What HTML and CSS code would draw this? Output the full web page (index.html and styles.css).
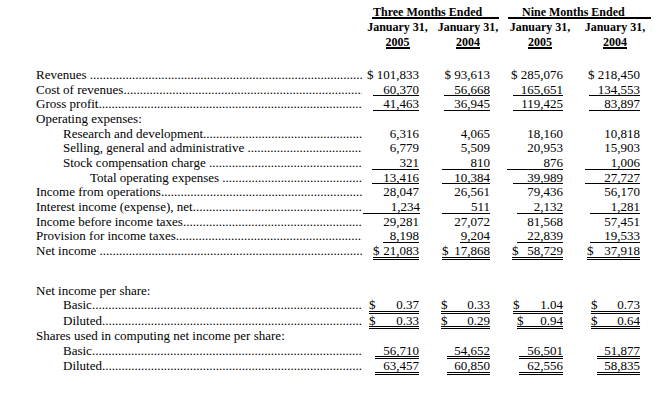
FILE: index.html
```html
<!DOCTYPE html>
<html lang="en">
<head>
<meta charset="utf-8">
<title>Condensed Consolidated Statements of Income</title>
<link rel="stylesheet" href="styles.css">
</head>
<body>
<div class="statement">
  <div class="head">
    <div class="title-cell span-three"><span class="title title-three">Three Months Ended</span></div>
    <div class="title-cell span-nine"><span class="title title-nine">Nine Months Ended</span></div>
    <div class="hc">January 31,</div>
    <div class="hc">January 31,</div>
    <div class="hc">January 31,</div>
    <div class="hc">January 31,</div>
    <div class="hc"><span class="yr">2005</span></div>
    <div class="hc"><span class="yr">2004</span></div>
    <div class="hc"><span class="yr">2005</span></div>
    <div class="hc"><span class="yr">2004</span></div>
  </div>

  <div class="grid">
    <div class="label"><span class="txt">Revenues </span><span class="dots"></span></div>
    <div class="v">$ 101,833</div>
    <div class="v">$ 93,613</div>
    <div class="v">$ 285,076</div>
    <div class="v">$ 218,450</div>

    <div class="label"><span class="txt">Cost of revenues</span><span class="dots"></span></div>
    <div class="v"><span class="u w46">60,370</span></div>
    <div class="v"><span class="u w46">56,668</span></div>
    <div class="v"><span class="u w50">165,651</span></div>
    <div class="v"><span class="u w51">134,553</span></div>

    <div class="label"><span class="txt">Gross profit</span><span class="dots"></span></div>
    <div class="v"><span class="u w46">41,463</span></div>
    <div class="v"><span class="u w46">36,945</span></div>
    <div class="v"><span class="u w50">119,425</span></div>
    <div class="v"><span class="u w51">83,897</span></div>

    <div class="section">Operating expenses:</div>

    <div class="label in1"><span class="txt">Research and development</span><span class="dots"></span></div>
    <div class="v">6,316</div>
    <div class="v">4,065</div>
    <div class="v">18,160</div>
    <div class="v">10,818</div>

    <div class="label in1"><span class="txt">Selling, general and administrative </span><span class="dots"></span></div>
    <div class="v">6,779</div>
    <div class="v">5,509</div>
    <div class="v">20,953</div>
    <div class="v">15,903</div>

    <div class="label in1"><span class="txt">Stock compensation charge </span><span class="dots"></span></div>
    <div class="v"><span class="u w47">321</span></div>
    <div class="v"><span class="u w48">810</span></div>
    <div class="v"><span class="u w56">876</span></div>
    <div class="v"><span class="u w55">1,006</span></div>

    <div class="label in2"><span class="txt">Total operating expenses </span><span class="dots"></span></div>
    <div class="v"><span class="u w47">13,416</span></div>
    <div class="v"><span class="u w48">10,384</span></div>
    <div class="v"><span class="u w50">39,989</span></div>
    <div class="v"><span class="u w55">27,727</span></div>

    <div class="label"><span class="txt">Income from operations</span><span class="dots"></span></div>
    <div class="v">28,047</div>
    <div class="v">26,561</div>
    <div class="v">79,436</div>
    <div class="v">56,170</div>

    <div class="label"><span class="txt">Interest income (expense), net</span><span class="dots"></span></div>
    <div class="v"><span class="u w57">1,234</span></div>
    <div class="v"><span class="u w48">511</span></div>
    <div class="v"><span class="u w46">2,132</span></div>
    <div class="v"><span class="u w50">1,281</span></div>

    <div class="label"><span class="txt">Income before income taxes</span><span class="dots"></span></div>
    <div class="v">29,281</div>
    <div class="v">27,072</div>
    <div class="v">81,568</div>
    <div class="v">57,451</div>

    <div class="label"><span class="txt">Provision for income taxes</span><span class="dots"></span></div>
    <div class="v"><span class="u w36">8,198</span></div>
    <div class="v"><span class="u w30">9,204</span></div>
    <div class="v"><span class="u w46">22,839</span></div>
    <div class="v"><span class="u w50">19,533</span></div>

    <div class="label"><span class="txt">Net income </span><span class="dots"></span></div>
    <div class="v"><span class="u dbl cur w46"><span>$</span><span>21,083</span></span></div>
    <div class="v"><span class="u dbl cur w48"><span>$</span><span>17,868</span></span></div>
    <div class="v"><span class="u dbl cur w51"><span>$</span><span>58,729</span></span></div>
    <div class="v"><span class="u dbl cur w53"><span>$</span><span>37,918</span></span></div>

    <div class="spacer"></div>

    <div class="section">Net income per share:</div>

    <div class="label in1"><span class="txt">Basic</span><span class="dots"></span></div>
    <div class="v"><span class="u dbl cur w50"><span>$</span><span>0.37</span></span></div>
    <div class="v"><span class="u dbl cur w49"><span>$</span><span>0.33</span></span></div>
    <div class="v"><span class="u dbl cur w50"><span>$</span><span>1.04</span></span></div>
    <div class="v"><span class="u dbl cur w49"><span>$</span><span>0.73</span></span></div>

    <div class="label in1"><span class="txt">Diluted</span><span class="dots"></span></div>
    <div class="v"><span class="u dbl cur w50"><span>$</span><span>0.33</span></span></div>
    <div class="v"><span class="u dbl cur w49"><span>$</span><span>0.29</span></span></div>
    <div class="v"><span class="u dbl cur w46"><span>$</span><span>0.94</span></span></div>
    <div class="v"><span class="u dbl cur w49"><span>$</span><span>0.64</span></span></div>

    <div class="section">Shares used in computing net income per share:</div>

    <div class="label in1"><span class="txt">Basic</span><span class="dots"></span></div>
    <div class="v"><span class="u dbl w44">56,710</span></div>
    <div class="v"><span class="u dbl w43">54,652</span></div>
    <div class="v"><span class="u dbl w44">56,501</span></div>
    <div class="v"><span class="u dbl w43">51,877</span></div>

    <div class="label in1"><span class="txt">Diluted</span><span class="dots"></span></div>
    <div class="v"><span class="u dbl w44">63,457</span></div>
    <div class="v"><span class="u dbl w43">60,850</span></div>
    <div class="v"><span class="u dbl w44">62,556</span></div>
    <div class="v"><span class="u dbl w43">58,835</span></div>
  </div>
</div>
</body>
</html>
```

FILE: styles.css
```css
html, body {
  margin: 0;
  padding: 0;
  background: #fff;
}

body {
  color: #000;
  font-family: "Liberation Serif", "Times New Roman", serif;
  font-size: 13px;
}

.statement {
  padding: 5px 0 0 36px;
  width: 630px;
}

/* ---------- column header ---------- */
.head {
  display: grid;
  grid-template-columns: 327px 69px 72px 72px 78px;
  font-size: 12px;
  font-weight: bold;
  line-height: 15px;
}

.title-cell {
  white-space: nowrap;
}

.span-three {
  grid-column: 2 / 4;
}

.span-nine {
  grid-column: 4 / 6;
}

.title {
  display: inline-block;
  line-height: 10px;
  border-bottom: 2px solid #000;
  vertical-align: baseline;
}

.title-three {
  margin-left: 9px;
  padding: 0 17px 0 1px;
}

.title-nine {
  margin-left: 4px;
  padding: 0 26px 0 14px;
}

.hc {
  text-align: center;
  white-space: nowrap;
}

.hc:nth-child(3) {
  grid-column: 2;
}

.hc:nth-child(7) {
  grid-column: 2;
}

.yr {
  display: inline-block;
  line-height: 10px;
  border-bottom: 2px solid #000;
}

/* ---------- body grid ---------- */
.grid {
  display: grid;
  grid-template-columns: 327px 56px 71px 73px 77px;
  line-height: 14.67px;
  margin-top: 18px;
}

.label {
  display: flex;
  min-width: 0;
  white-space: nowrap;
  padding-right: 1px;
}

.label .txt {
  white-space: pre;
  flex: none;
}

.label .dots {
  flex: 1;
  min-width: 0;
  overflow: hidden;
}

.label .dots::after {
  content: "..........................................................................................................................................";
}

.in1 {
  padding-left: 27px;
}

.in2 {
  padding-left: 54px;
}

.section {
  grid-column: 1 / -1;
}

.spacer {
  grid-column: 1 / -1;
  height: 24px;
}

.v {
  text-align: right;
  white-space: nowrap;
}

.u {
  display: inline-block;
  line-height: 11.5px;
  border-bottom: 1px solid #000;
  text-align: right;
}

.dbl {
  border-bottom: 3px double #000;
}

.cur {
  display: inline-flex;
  justify-content: space-between;
}

.w30 { width: 30px; }
.w36 { width: 36px; }
.w43 { width: 43px; }
.w44 { width: 44px; }
.w46 { width: 46px; }
.w47 { width: 47px; }
.w48 { width: 48px; }
.w49 { width: 49px; }
.w50 { width: 50px; }
.w51 { width: 51px; }
.w53 { width: 53px; }
.w55 { width: 55px; }
.w56 { width: 56px; }
.w57 { width: 57px; }
```
